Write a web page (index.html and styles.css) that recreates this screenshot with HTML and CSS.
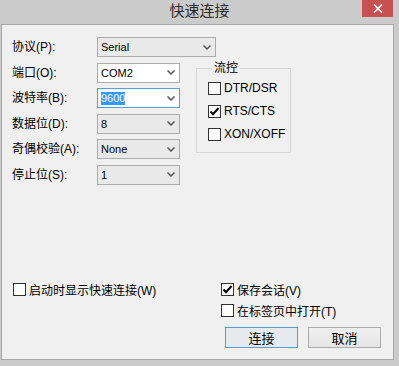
FILE: index.html
```html
<!DOCTYPE html>
<html lang="zh-CN">
<head>
    <meta charset="UTF-8">
    <title>快速连接</title>
    <link rel="stylesheet" href="styles.css">
</head>
<body>
<div id="window">
    <div id="titlebar">
        <span class="title">快速连接</span>
        <span id="close">
            <svg width="10" height="9" viewBox="0 0 10 9"><path d="M1 0.5 L9 8.5 M9 0.5 L1 8.5" stroke="#fff" stroke-width="1.6" fill="none"/></svg>
        </span>
    </div>
    <div id="panel">
        <div id="form">
            <fieldset id="flow">
                <legend>流控</legend>
                <div class="check"><span class="box"></span>DTR/DSR</div>
                <div class="check"><span class="box on"><svg width="11" height="11" viewBox="0 0 11 11"><path d="M1.5 5.5 L4 8.2 L9.5 2" stroke="#000" stroke-width="2" fill="none"/></svg></span>RTS/CTS</div>
                <div class="check"><span class="box"></span>XON/XOFF</div>
            </fieldset>

            <label class="lab">协议(P):</label>
            <div class="combo list wide"><span>Serial</span><svg class="arrow" width="8" height="5" viewBox="0 0 8 5"><path d="M0.5 0.5 L4 4 L7.5 0.5" stroke="#555" stroke-width="1.5" fill="none"/></svg></div>

            <label class="lab">端口(O):</label>
            <div class="combo"><span>COM2</span><svg class="arrow" width="8" height="5" viewBox="0 0 8 5"><path d="M0.5 0.5 L4 4 L7.5 0.5" stroke="#555" stroke-width="1.5" fill="none"/></svg></div>

            <label class="lab">波特率(B):</label>
            <div class="combo focus"><span class="sel">9600</span><svg class="arrow" width="8" height="5" viewBox="0 0 8 5"><path d="M0.5 0.5 L4 4 L7.5 0.5" stroke="#555" stroke-width="1.5" fill="none"/></svg></div>

            <label class="lab">数据位(D):</label>
            <div class="combo list"><span>8</span><svg class="arrow" width="8" height="5" viewBox="0 0 8 5"><path d="M0.5 0.5 L4 4 L7.5 0.5" stroke="#555" stroke-width="1.5" fill="none"/></svg></div>

            <label class="lab">奇偶校验(A):</label>
            <div class="combo list"><span>None</span><svg class="arrow" width="8" height="5" viewBox="0 0 8 5"><path d="M0.5 0.5 L4 4 L7.5 0.5" stroke="#555" stroke-width="1.5" fill="none"/></svg></div>

            <label class="lab">停止位(S):</label>
            <div class="combo list"><span>1</span><svg class="arrow" width="8" height="5" viewBox="0 0 8 5"><path d="M0.5 0.5 L4 4 L7.5 0.5" stroke="#555" stroke-width="1.5" fill="none"/></svg></div>
        </div>

        <div id="bottom">
            <div class="check first"><span class="box"></span>启动时显示快速连接(W)</div>
            <div class="check"><span class="box on"><svg width="11" height="11" viewBox="0 0 11 11"><path d="M1.5 5.5 L4 8.2 L9.5 2" stroke="#000" stroke-width="2" fill="none"/></svg></span>保存会话(V)</div>
            <div class="check right"><span class="box"></span>在标签页中打开(T)</div>
            <div class="buttons">
                <button class="btn default">连接</button>
                <button class="btn">取消</button>
            </div>
        </div>
    </div>
</div>
</body>
</html>
```

FILE: styles.css
```css
*{
    margin:0;
    padding:0;
}
body{
    background:#cbcbcb;
    font:12px "Liberation Sans","Noto Sans CJK SC",sans-serif;
    color:#000;
}
#window{
    width:399px;
    height:366px;
}
#titlebar{
    height:24px;
    display:grid;
    grid-template-columns:1fr auto 1fr;
    align-items:start;
}
#titlebar .title{
    grid-column:2;
    font-family:"Noto Sans CJK SC",sans-serif;
    font-size:15px;
    line-height:20px;
    color:#2b2b2b;
}
#close{
    grid-column:3;
    justify-self:end;
    width:31px;
    height:17px;
    margin-right:6px;
    background:#c75050;
    display:flex;
    align-items:center;
    justify-content:center;
}
#panel{
    box-sizing:border-box;
    margin-left:1px;
    width:393px;
    height:336px;
    border:1px solid #a5a5a5;
    background:#f0f0f0;
    padding:12px 10px 11px 10px;
    display:flex;
    flex-direction:column;
}
#form{
    display:grid;
    grid-template-columns:85px 99px 95px;
    grid-auto-rows:20px;
    row-gap:5.6px;
}
.lab{
    line-height:20px;
    white-space:nowrap;
}
.combo{
    box-sizing:border-box;
    width:83px;
    height:20px;
    border:1px solid #acacac;
    background:#fff;
    padding:0 4px 0 3px;
    display:flex;
    align-items:center;
    justify-content:space-between;
    font-size:11px;
}
.combo.list{
    background:#e9e9e9;
}
.combo.wide{
    grid-column:span 2;
    width:119px;
}
.combo.focus{
    border-color:#569de5;
}
.combo .sel{
    background:#3399ff;
    color:#fff;
    line-height:13px;
}
#flow{
    grid-column:3;
    grid-row:2 / 6;
    align-self:start;
    margin-top:-3px;
    border:1px solid #d5d5d5;
    padding:0 0 6px 11px;
    min-width:0;
}
#flow legend{
    margin-left:4px;
    padding:0 2px;
    line-height:17px;
}
#flow .check{
    height:23px;
}
.check{
    display:flex;
    align-items:center;
    gap:3px;
    white-space:nowrap;
}
.box{
    box-sizing:border-box;
    width:13px;
    height:13px;
    border:1px solid #333;
    background:#fff;
    display:flex;
    align-items:center;
    justify-content:center;
}
#bottom{
    margin-top:auto;
    display:grid;
    grid-template-columns:209px 1fr;
    grid-template-rows:21px 21px 27px;
}
#bottom .first{
    margin-left:1px;
}
#bottom .right{
    grid-column:2;
}
.buttons{
    grid-column:2;
    align-self:end;
    margin-left:4px;
    display:flex;
    gap:10px;
}
.btn{
    box-sizing:border-box;
    width:73px;
    height:21px;
    border:1px solid #acacac;
    background:linear-gradient(#f0f0f0,#e5e5e5);
    font:13px "Noto Sans CJK SC",sans-serif;
    color:#000;
}
.btn.default{
    border-color:#5a9bd8;
    background:#e6eaee;
}
```
